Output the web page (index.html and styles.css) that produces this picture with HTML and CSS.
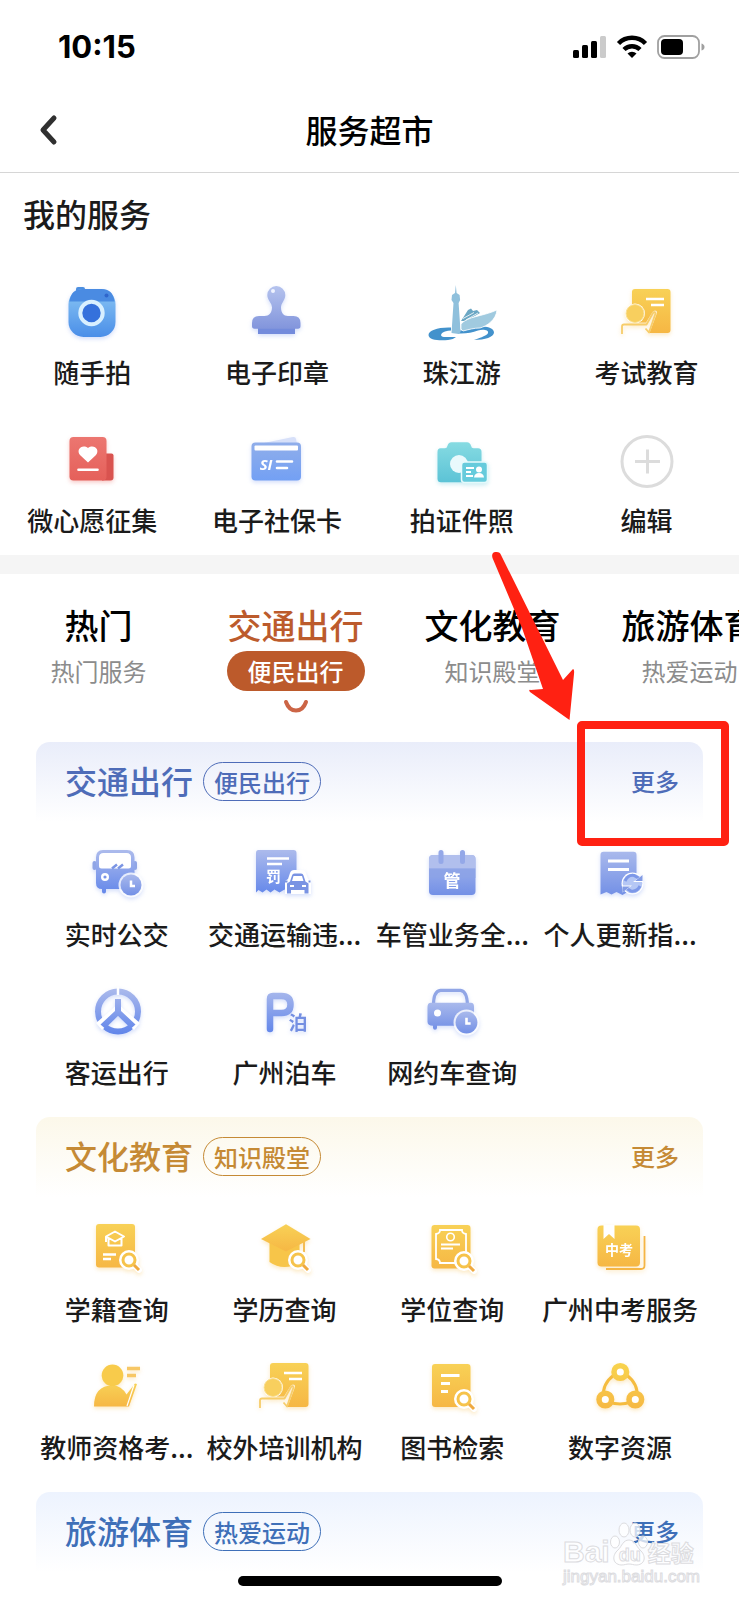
FILE: index.html
```html
<!DOCTYPE html>
<html lang="zh-CN">
<head>
<meta charset="utf-8">
<meta name="viewport" content="width=device-width, initial-scale=1">
<title>服务超市</title>
<link rel="stylesheet" href="styles.css">
</head>
<body>
<svg class="defs" width="0" height="0" aria-hidden="true">
  <defs>
    <linearGradient id="blue" x1="0" y1="0" x2="0" y2="1"><stop offset="0" stop-color="#a9b9ec"/><stop offset="1" stop-color="#7390e6"/></linearGradient>
    <linearGradient id="blueTall" gradientUnits="userSpaceOnUse" x1="0" y1="2" x2="0" y2="50"><stop offset="0" stop-color="#aebcec"/><stop offset="1" stop-color="#5f84ea"/></linearGradient>
    <linearGradient id="gold" x1="0" y1="0" x2="0" y2="1"><stop offset="0" stop-color="#f8d156"/><stop offset="1" stop-color="#f6b744"/></linearGradient>
    <linearGradient id="goldTall" gradientUnits="userSpaceOnUse" x1="0" y1="2" x2="0" y2="50"><stop offset="0" stop-color="#f8d44e"/><stop offset="1" stop-color="#f6b843"/></linearGradient>
    <linearGradient id="sky" x1="0" y1="0" x2="0" y2="1"><stop offset="0" stop-color="#8ac6f4"/><stop offset="1" stop-color="#4a8ee8"/></linearGradient>
    <linearGradient id="stamp" x1="0" y1="0" x2="0" y2="1"><stop offset="0" stop-color="#b5c3ee"/><stop offset="1" stop-color="#8295dc"/></linearGradient>
    <linearGradient id="red" x1="0" y1="0" x2="0" y2="1"><stop offset="0" stop-color="#ec7670"/><stop offset="1" stop-color="#e5605a"/></linearGradient>
    <linearGradient id="card" x1="0" y1="0" x2="0" y2="1"><stop offset="0" stop-color="#90aeea"/><stop offset="1" stop-color="#73a0f4"/></linearGradient>
    <linearGradient id="teal" x1="0" y1="0" x2="0" y2="1"><stop offset="0" stop-color="#86dbe2"/><stop offset="1" stop-color="#5cc3d6"/></linearGradient>
    <symbol id="lens" viewBox="0 0 24 24">
      <circle cx="10" cy="10" r="10" fill="#fff"/><path d="M15 15l5 5" stroke="#fff" stroke-width="6" stroke-linecap="round"/>
      <circle cx="10" cy="10" r="6" fill="#fff" stroke="#f6c34b" stroke-width="3"/><path d="M15 15l5 5" stroke="#efa93f" stroke-width="3"/>
    </symbol>
    <symbol id="clock" viewBox="0 0 26 26">
      <circle cx="13" cy="13" r="12.500" fill="#fff" fill-opacity=".8"/><circle cx="13" cy="13" r="10.500" fill="url(#blue)"/>
      <path d="M13 8.500v5.500h4" fill="none" stroke="#fff" stroke-width="2.500"/>
    </symbol>
    <symbol id="lesson" viewBox="0 0 52 52">
      <path d="M14 3h32.500q3 0 3 3v38q0 3-3 3H28.500l7.500-20q.5-2.500-2-2.500-1.500 0-2.500 1.500l-6.500 10.500H11V6q0-3 3-3z" fill="url(#gold)"/>
      <path d="M25 13h18M30 19h13" stroke="#fff" stroke-width="2.400"/>
      <circle cx="14" cy="27.500" r="10" fill="#fff"/><circle cx="14" cy="27.500" r="9" fill="#f8cf5e" stroke="#fae094"/>
      <path d="M1 48v-7.500q0-2 2-2h22.500L32 27q1.500-2 2.500.5L28 46.500l-3.500-4" fill="none" stroke="#f7cd6a" stroke-width="1.800" stroke-linejoin="round"/>
    </symbol>
  </defs>
</svg>

<div class="screen">
  <header class="top">
    <div class="status">
      <time class="clock">10:15</time>
      <div class="indicators">
        <svg width="34" height="24" viewBox="0 0 34 24" aria-hidden="true"><g fill="#000"><rect x="0" y="15" width="6" height="8" rx="1.500"/><rect x="9" y="10" width="6" height="13" rx="1.500"/><rect x="18" y="6" width="6" height="17" rx="1.500"/></g><rect x="27" y="1" width="6" height="22" rx="1.500" fill="#cbcbcb"/></svg>
        <svg width="32" height="24" viewBox="0 0 32 24" aria-hidden="true"><g fill="none" stroke="#000" stroke-width="4.500"><path d="M2.500 8.500a19 19 0 0 1 27 0"/><path d="M8 14.500a11.500 11.500 0 0 1 16 0"/></g><path d="M11.500 18.500a6.500 6.500 0 0 1 9 0L16 23z"/></svg>
        <svg width="48" height="24" viewBox="0 0 48 24" aria-hidden="true"><rect x="1" y="1" width="41" height="22" rx="6.500" fill="#fff" stroke="#a0a0a0" stroke-width="1.800"/><rect x="4" y="4" width="22" height="16" rx="4"/><path d="M44.500 8.500q3 1 3 3.500t-3 3.500z" fill="#a0a0a0"/></svg>
      </div>
    </div>
    <div class="navbar">
      <button class="back" type="button" aria-label="返回"><svg width="20" height="32" viewBox="0 0 20 32"><path d="M16 4L5 16l11 12" fill="none" stroke="#303030" stroke-width="5" stroke-linecap="round" stroke-linejoin="round"/></svg></button>
      <h1 class="title">服务超市</h1>
    </div>
  </header>

  <main>
    <section class="mine">
      <h2 class="mine-title">我的服务</h2>
      <div class="grid">
        <a class="item" href="#"><svg class="icon glow-blue" viewBox="0 0 52 52"><rect x="10" y="1" width="9" height="8" rx="2" fill="#4c8fe0"/><rect x="2.500" y="3" width="47" height="48" rx="15" fill="url(#sky)"/><path d="M3.500 15.500C4.500 7 9 3 16.500 3h19c7.500 0 12 4 13 12.500z" fill="#4a8be2"/><circle cx="40.500" cy="9.500" r="2" fill="#2f66cc"/><circle cx="25.500" cy="27" r="11.200" fill="#3571dc" stroke="#d9f0ff" stroke-width="4"/></svg><span class="label">随手拍</span></a>
        <a class="item" href="#"><svg class="icon glow-blue" viewBox="0 0 52 52"><rect x="7" y="41" width="37" height="7" fill="#738bdc"/><path d="M25.300 0a9 9 0 0 1 9 9c0 5-4.300 8-4.300 12.500 0 5 2.500 8.500 7 8.500h5.500q7 0 7 7v3q0 2.700-2.500 2.700H3.500Q1 42.700 1 40v-3q0-7 7-7h5.500c4.500 0 7.500-3.500 7.500-8.500C21 17 16.300 14 16.300 9a9 9 0 0 1 9-9z" fill="url(#stamp)"/><circle cx="22" cy="5" r="2" fill="#eef2ff"/></svg><span class="label">电子印章</span></a>
        <a class="item" href="#"><svg class="icon" viewBox="0 0 52 52"><path d="M15 41.500C2 41-7.500 44.500-7.500 49c0 5 11 6 19.500 5 4-.5 6-1.500 8-3H8c-4 0-4-4 1-5.500 2-.7 4-1 6-1zM22 47.500c8 .5 14-1 20-3 5-1.500 11-.5 10 2.500-1 2.500-6 4-14 7 11 0 20-3 20-7.500 0-5-8-6.500-15-5.500-8 1-12 4-21 3.500z" fill="#4392cc"/><path d="M15.500 47l2-30-2-3 .5-5 3-2 .8-8 .8 8 3 2 .5 5-1.500 3 2 29-2 2z" fill="#8fc0dc"/><path d="M25 35l7-11 3-1.500 2 2.500 4-1 3 3-14 8z" fill="#6ba7c4"/><path d="M25 38c7-8 20-7 36-14-1 10-10 16-17 18-6 0-11 1.500-17 3l-2-2z" fill="#a0cadf" stroke="#fff" stroke-width=".8"/><path d="M27 32.500l11-6M30 34l12-7" stroke="#fff" stroke-width=".8"/></svg><span class="label">珠江游</span></a>
        <a class="item" href="#"><svg class="icon glow-gold"><use href="#lesson"/></svg><span class="label">考试教育</span></a>
        <a class="item" href="#"><svg class="icon glow-red" viewBox="0 0 52 52"><path d="M36 19.500h9.500q2 0 2 2v22q0 3-3 3H36z" fill="#d9534f"/><rect x="3.500" y="3" width="37" height="43.500" rx="4" fill="url(#red)"/><path d="M22 28.500l-7.500-7c-5.500-6 2-12 7.500-7.500 5.500-4.500 13 1.500 7.500 7.500z" fill="#fff"/><path d="M12.500 35.800h19" stroke="#fff" stroke-width="2.600" stroke-linecap="round"/></svg><span class="label">微心愿征集</span></a>
        <a class="item" href="#"><svg class="icon glow-blue" viewBox="0 0 52 52"><path d="M13 9l29-6q2.500-.5 3 2l1 6z" fill="#d7e0f9"/><rect x=".5" y="8.500" width="49.500" height="38" rx="4" fill="url(#card)"/><rect x="3.500" y="11.500" width="43.500" height="5" rx="1" fill="#fff"/><text class="glyph-si" x="15" y="36">SI</text><path d="M26 27.500h15M26 34h10" stroke="#fff" stroke-width="2.600" stroke-linecap="round"/></svg><span class="label">电子社保卡</span></a>
        <a class="item" href="#"><svg class="icon glow-teal" viewBox="0 0 52 52"><path d="M4.500 14.300H9q2 0 2.500-2.500.8-3.500 4-3.500h15.500q3 0 4 3.500.5 2.500 2.500 2.500H42q3.500 0 3.500 3.500v27q0 3.500-3.500 3.500H5q-3.500 0-3.500-3.500V18q0-3.700 3-3.700z" fill="url(#teal)"/><circle cx="23" cy="30" r="9" fill="#e9f9fc"/><rect x="25.500" y="28" width="26" height="20.500" rx="3" fill="#66cbdc" stroke="#e5fafc" stroke-width="1.500"/><path d="M30 34h8M30 38h5M30 42h7" stroke="#fff" stroke-width="1.800"/><circle cx="43" cy="35.500" r="3" fill="#fff"/><path d="M38 43.500q.5-4.500 5-4.500t5 4.500z" fill="#fff"/></svg><span class="label">拍证件照</span></a>
        <a class="item" href="#"><svg class="icon" viewBox="0 0 52 52"><circle cx="26" cy="27.500" r="25" fill="none" stroke="#dcdcdc" stroke-width="3"/><path d="M14 27.500h25M26.500 15.500v24" stroke="#dcdcdc" stroke-width="3"/></svg><span class="label">编辑</span></a>
      </div>
    </section>

    <nav class="tabs" aria-label="服务分类">
      <button class="tab" type="button"><span class="tab-name">热门</span><span class="tab-sub">热门服务</span></button>
      <button class="tab active" type="button" aria-current="true"><span class="tab-name">交通出行</span><span class="tab-sub">便民出行</span><svg class="smile" width="28" height="16" viewBox="0 0 28 16"><path d="M4 3q3 8.500 10 8.500T24 3" fill="none" stroke="#cc6546" stroke-width="4" stroke-linecap="round"/></svg></button>
      <button class="tab" type="button"><span class="tab-name">文化教育</span><span class="tab-sub">知识殿堂</span></button>
      <button class="tab" type="button"><span class="tab-name">旅游体育</span><span class="tab-sub">热爱运动</span></button>
    </nav>

    <section class="group traffic">
      <header class="group-head"><h2 class="group-title">交通出行</h2><span class="chip">便民出行</span><a class="more" href="#">更多</a></header>
      <div class="grid">
        <a class="item" href="#"><svg class="icon glow-blue" viewBox="0 0 52 52"><rect x="1.500" y="14" width="4" height="9" rx="2" fill="#8fa5e6"/><rect x="42" y="14" width="4" height="9" rx="2" fill="#8fa5e6"/><path d="M12 3h24q7.500 0 7.500 7.500V42H15v2.500q0 2-2 2t-2-2V42q-6 0-6-6V10.500Q5 3 12 3z" fill="url(#blueTall)"/><path d="M12.500 6h23q4.500 0 4.500 4.500V19q0 2.500-2.500 2.500h-27Q8 21.500 8 19v-8.500Q8 6 12.500 6z" fill="#fff"/><path d="M21 21.500l5-4M27 21.500l5-4" stroke="#7b95e4" stroke-width="2.500"/><circle cx="14" cy="30" r="2.800" fill="#7893e8" stroke="#fff" stroke-width="2.400"/><use href="#clock" x="27" y="25" width="26" height="26"/></svg><span class="label">实时公交</span></a>
        <a class="item" href="#"><svg class="icon glow-blue" viewBox="0 0 52 52"><path d="M3.500 3h31q3 0 3 3v39.500l-4-2-4 2-4-3-5 3-5-3-4 3-4-3-4 3-4-2.500-2.500 2.500V6q0-3 2.500-3z" fill="url(#blueTall)"/><path d="M8 11.500h22M8 17h15" stroke="#fff" stroke-width="2.400"/><text class="glyph" font-size="15" x="14.500" y="35">罚</text><path d="M26 47V34l3-2 2-6q1-3 4-3h8q3 0 4 3l2 6 3 2v13z" fill="#fff"/><path d="M28 46.500v-10l3-2 2-6q.5-2 2.500-2h6.500q2 0 2.500 2l2 6 3 2v10h-4V43H32v3.500zM33 34h11.500l-1.500-5h-8.500z" fill="#7993e3" fill-rule="evenodd"/><path d="M31 39h4M43 39h4" stroke="#fff" stroke-width="1.800"/><path d="M25.500 34.500h3M49.500 34.500h2" stroke="#7993e3" stroke-width="2"/></svg><span class="label">交通运输违...</span></a>
        <a class="item" href="#"><svg class="icon glow-blue" viewBox="0 0 52 52"><rect x="3" y="8" width="46.500" height="40" rx="4" fill="url(#blue)"/><path d="M3 21.500V12q0-4 4-4h38.500q4 0 4 4v9.500z" fill="#b1bfed"/><path d="M3 21.500h46.500V31H3z" fill="#8ba2e6" opacity=".7"/><path d="M15 5.500v9M36.500 5.500v9" stroke="#94a8e8" stroke-width="5" stroke-linecap="round"/><text class="glyph" font-size="17" x="26" y="40">管</text></svg><span class="label">车管业务全...</span></a>
        <a class="item" href="#"><svg class="icon glow-blue" viewBox="0 0 52 52"><path d="M9.500 4.700h30q3 0 3 3V46l-4 1-5-2-5 3-6-3-5 2.500-5-2.500-6 2.500V7.700q0-3 3-3z" fill="url(#blue)"/><path d="M14 14h21M14 22.500h21" stroke="#fff" stroke-width="2.800"/><circle cx="38.500" cy="36.500" r="11" fill="#fff"/><circle cx="38.500" cy="36.500" r="9.800" fill="#b5c7f5"/><path d="M31 34q3-6.500 9-5.500l7 4M46 39q-3 6-9 5l-6.500-4" fill="none" stroke="#7d98e8" stroke-width="3"/><path d="M39 35h9.500v-7zM38 38.500h-9.500v7z" fill="#fff"/><path d="M41 34h7.500v-6zM36 39.500h-7.500v6z" fill="#829be5"/></svg><span class="label">个人更新指...</span></a>
        <a class="item" href="#"><svg class="icon glow-blue" viewBox="0 0 52 52"><circle cx="27" cy="26.500" r="20" fill="none" stroke="url(#blueTall)" stroke-width="6"/><path d="M27 2v8" stroke="#fff" stroke-width="2.500"/><path d="M27 25L8 41.500M27 25l19 16.500" stroke="#fff" stroke-width="9"/><path d="M24 14h6v12l14.500 13.500-4.500 4L27 31 14 43.500l-4.500-4L24 26z" fill="url(#blueTall)"/></svg><span class="label">客运出行</span></a>
        <a class="item" href="#"><svg class="icon glow-blue" viewBox="0 0 52 52"><path d="M11 44V14q0-3 3-3h8.500q9 0 9 8.500T22.500 28H11" fill="none" stroke="url(#blueTall)" stroke-width="6.500" stroke-linecap="round"/><text class="glyph outline" font-size="19" x="39" y="44.500">泊</text></svg><span class="label">广州泊车</span></a>
        <a class="item" href="#"><svg class="icon glow-blue" viewBox="0 0 52 52"><path d="M7.500 20q0-14 7-14.700h20q6.500.7 7 14.700" fill="none" stroke="#91a6e6" stroke-width="3.200"/><path d="M5 17.700h40q3 0 3 4v16q0 3-3.500 3H11v2q0 2-2 2t-2-2v-2q-5.500 0-5.500-4V22q0-4.300 3.500-4.300z" fill="url(#blue)"/><circle cx="11.500" cy="28" r="3.500" fill="#fff"/><use href="#clock" x="27" y="24" width="27" height="27"/></svg><span class="label">网约车查询</span></a>
      </div>
    </section>

    <section class="group culture">
      <header class="group-head"><h2 class="group-title">文化教育</h2><span class="chip">知识殿堂</span><a class="more" href="#">更多</a></header>
      <div class="grid">
        <a class="item" href="#"><svg class="icon glow-gold" viewBox="0 0 52 52"><rect x="5" y="2" width="39" height="43.500" rx="3" fill="url(#gold)"/><g fill="none" stroke="#fff" stroke-width="2" stroke-linejoin="round"><path d="M24 9.500l-9 5 9 5 9-5zM17.500 16.500v7h13v-7M15 15v5"/></g><path d="M12 32.500h13M12 37h8" stroke="#fff" stroke-width="2.400"/><use href="#lens" x="28" y="28" width="24" height="24"/></svg><span class="label">学籍查询</span></a>
        <a class="item" href="#"><svg class="icon glow-gold" viewBox="0 0 52 52"><path d="M10.500 20h30v20q-7 5-15 5t-15-5z" fill="#f7c549"/><path d="M45 18v12" stroke="#f4bd55" stroke-width="2"/><path d="M27 2.300L51.500 17 27 29.500 2 17z" fill="url(#gold)"/><use href="#lens" x="29" y="28" width="24" height="24"/></svg><span class="label">学历查询</span></a>
        <a class="item" href="#"><svg class="icon glow-gold" viewBox="0 0 52 52"><rect x="5.500" y="3" width="39" height="43.500" rx="3" fill="url(#gold)"/><g fill="none" stroke="#fff"><path d="M14 8h22q0 3.500 4 4v25q-4 .5-4 4H14q0-3.500-4-4V12q4-.500 4-4z" stroke-width="1.800"/><circle cx="24.500" cy="15" r="3.800" stroke-width="1.600"/><path d="M15 22.500h19M15 26.500h12" stroke-width="1.800"/></g><use href="#lens" x="28" y="29" width="24" height="24"/></svg><span class="label">学位查询</span></a>
        <a class="item" href="#"><svg class="icon glow-gold" viewBox="0 0 52 52"><path d="M12 47h35q3.500 0 3.500-3.500V14" fill="none" stroke="#f5b544" stroke-width="1.800"/><rect x="3.500" y="3.500" width="42.500" height="41" rx="4" fill="url(#gold)"/><path d="M9.500 3h11v14L15 12l-5.500 5z" fill="#fff"/><text class="glyph" font-size="14" x="25" y="33">中考</text></svg><span class="label">广州中考服务</span></a>
        <a class="item" href="#"><svg class="icon glow-gold" viewBox="0 0 52 52"><path d="M3 46.500q0-21 18.500-21 9 0 14 9l8.500-11 2 .5-8 22.500z" fill="url(#gold)"/><circle cx="21.500" cy="15.300" r="10.800" fill="#f8cb4b"/><path d="M36 8.500h13M36 15.500h9" stroke="#f7c765" stroke-width="3.400"/><path d="M43 25l-7 21" stroke="#fff" stroke-width="1.200"/></svg><span class="label">教师资格考...</span></a>
        <a class="item" href="#"><svg class="icon glow-gold"><use href="#lesson"/></svg><span class="label">校外培训机构</span></a>
        <a class="item" href="#"><svg class="icon glow-gold" viewBox="0 0 52 52"><rect x="6" y="4" width="38.500" height="43" rx="3" fill="url(#gold)"/><path d="M15 15.500h18.500M15 23.500h9M15 31.500h7" stroke="#fff" stroke-width="2.800"/><use href="#lens" x="28" y="29" width="24" height="24"/></svg><span class="label">图书检索</span></a>
        <a class="item" href="#"><svg class="icon glow-gold" viewBox="0 0 52 52"><path d="M20 15Q8 24 9.500 37M32.500 15Q44.500 24 43 37M15 42q11 4 22 0" fill="none" stroke="#f5bc3f" stroke-width="3"/><g fill="#fff" stroke="url(#goldTall)" stroke-width="5.500"><circle cx="26.300" cy="12" r="6.300"/><circle cx="11.300" cy="39.500" r="6.300"/><circle cx="41.300" cy="39.500" r="6.300"/></g></svg><span class="label">数字资源</span></a>
      </div>
    </section>

    <section class="group sport">
      <header class="group-head"><h2 class="group-title">旅游体育</h2><span class="chip">热爱运动</span><a class="more" href="#">更多</a></header>
    </section>
  </main>

  <div class="marker-box"></div>
  <svg class="marker-arrow" width="130" height="170" viewBox="0 0 130 170" aria-hidden="true"><path d="M4.500 8Q3 2.500 7.500 2T13 5L75 130l10-11q1.500 0 1 5l-4.500 46L42 142q-2-3 1-2l12-1L34 78z" fill="#ff2112"/></svg>

  <div class="watermark" aria-hidden="true">
    <div class="wm-brand"><span>Bai</span><span class="wm-paw"><svg width="38" height="46" viewBox="0 0 38 46"><g fill="#fff" fill-opacity=".75" stroke="#dcdcdf"><ellipse cx="5" cy="20" rx="4.500" ry="6"/><ellipse cx="14" cy="8" rx="5" ry="7"/><ellipse cx="25" cy="8" rx="5" ry="7"/><ellipse cx="33" cy="20" rx="4.500" ry="6"/><path d="M19 18c6 0 7 6 11 10 6 5 6 14-3 15-4 0-5-1-8-1s-4 1-8 1c-9-1-9-10-3-15 4-4 5-10 11-10z"/></g></svg><span class="wm-du">du</span></span><span class="wm-cn">经验</span></div>
    <div class="wm-url">jingyan.baidu.com</div>
  </div>
  <div class="home-bar"></div>
</div>
</body>
</html>
```

FILE: styles.css
```css
* { box-sizing: border-box; }
body {
  margin: 0;
  background: #fff;
  color: #1b1b1b;
  font-family: "Noto Sans CJK SC", "Noto Sans", sans-serif;
  font-weight: 500;
}
h1, h2 { margin: 0; font-weight: 500; }
a { color: inherit; text-decoration: none; }
button { padding: 0; border: 0; background: none; color: inherit; font: inherit; }
.defs { position: absolute; }
.screen { position: relative; min-height: 100vh; overflow: hidden; padding-bottom: 29px; }

.top { border-bottom: 1px solid #d6d6d6; }
.status { display: flex; align-items: center; justify-content: space-between; height: 94px; padding: 0 34px 0 58px; }
.clock { color: #000; font: 700 31px/32px Inter, sans-serif; }
.indicators { display: flex; align-items: center; gap: 9px; }
.navbar { display: grid; grid-template-columns: 80px 1fr 80px; align-items: center; height: 78px; padding-bottom: 6px; }
.back { display: flex; margin-left: 38px; width: 20px; }
.title { color: #000; font-size: 32px; line-height: 40px; padding-bottom: 2px; text-align: center; }

.grid { display: grid; grid-template-columns: repeat(4, minmax(0, 1fr)); }
.item { display: flex; flex-direction: column; align-items: center; gap: 16px; }
.icon { display: block; width: 52px; height: 52px; overflow: visible; }
.label { font-size: 26px; line-height: 36px; white-space: nowrap; }
.glyph { fill: #fff; font-weight: 700; text-anchor: middle; }
.glyph.outline { fill: #748fe2; }
.glyph-si { fill: #fff; font: italic 700 15px "Open Sans", sans-serif; text-anchor: middle; }
.glow-blue { filter: drop-shadow(0 2px 2px #7f9df055); }
.glow-gold { filter: drop-shadow(0 2px 2px #f5bd4a55); }
.glow-red { filter: drop-shadow(0 2px 2px #e8605a55); }
.glow-teal { filter: drop-shadow(0 2px 2px #5fc6d855); }

.mine { padding: 20px 0 17px; border-bottom: 19px solid #f5f5f5; }
.mine-title { margin: 0 0 53px 23px; font-size: 32px; line-height: 40px; }
.mine .grid { row-gap: 44px; }

.tabs { display: flex; height: 168px; padding-top: 29px; overflow: hidden; }
.tab { display: flex; flex: 0 0 197px; flex-direction: column; align-items: center; }
.tab-name { color: #000; font-size: 34px; line-height: 44px; }
.tab-sub { margin-top: 4px; padding: 0 21px; border-radius: 20px; color: #8c8c8c; font-size: 24px; font-weight: 400; line-height: 40px; white-space: nowrap; }
.active .tab-name { color: #bc5b2c; }
.active .tab-sub { background: #bc5a2b; color: #fff; font-weight: 500; }
.smile { margin-top: 8px; }

.group { --tone: #4e6cb8; --wash: #e9edfa; margin: 0 36px; padding-bottom: 27px; }
.group:last-child { padding-bottom: 0; }
.culture { --tone: #c58a35; --wash: #fcf8ea; }
.sport { --tone: #3e6fb8; --wash: #edf3fe; }
.group-head {
  display: flex;
  align-items: center;
  height: 80px;
  padding: 0 24px 2px 29px;
  border-radius: 14px 14px 0 0;
  background: linear-gradient(var(--wash), #fff);
  color: var(--tone);
}
.group-title { padding-bottom: 2px; font-size: 32px; line-height: 40px; }
.chip { margin-left: 10px; padding: 0 10px; border: 1px solid var(--tone); border-radius: 20px; font-size: 24px; line-height: 37px; }
.more { margin-left: auto; font-size: 24px; line-height: 40px; }
.group .grid { margin: 25px -1px 0 -3px; row-gap: 34px; }
.group .item { gap: 17px; }
.group .grid { row-gap: 33px; }

.marker-box { position: absolute; top: 721px; right: 10px; width: 152px; height: 125px; border: 8px solid #ff2112; border-radius: 5px; }
.marker-arrow { position: absolute; top: 550px; right: 121px; }

.home-bar { position: absolute; bottom: 15px; left: 50%; width: 264px; height: 10px; margin-left: -132px; border-radius: 5px; background: #000; }
.watermark { position: absolute; right: 39px; bottom: 15px; color: #ffffffc0; -webkit-text-stroke: 1px #dcdcdf; }
.wm-brand { display: flex; align-items: flex-end; font: 700 30px/32px "Liberation Sans", sans-serif; }
.wm-paw { position: relative; height: 46px; }
.wm-du { position: absolute; bottom: 1px; left: 9px; font-size: 18px; line-height: 24px; }
.wm-cn { font-family: "Noto Sans CJK SC", sans-serif; font-size: 23px; }
.wm-url { font: 400 17px/18px "Liberation Sans", sans-serif; }
```
